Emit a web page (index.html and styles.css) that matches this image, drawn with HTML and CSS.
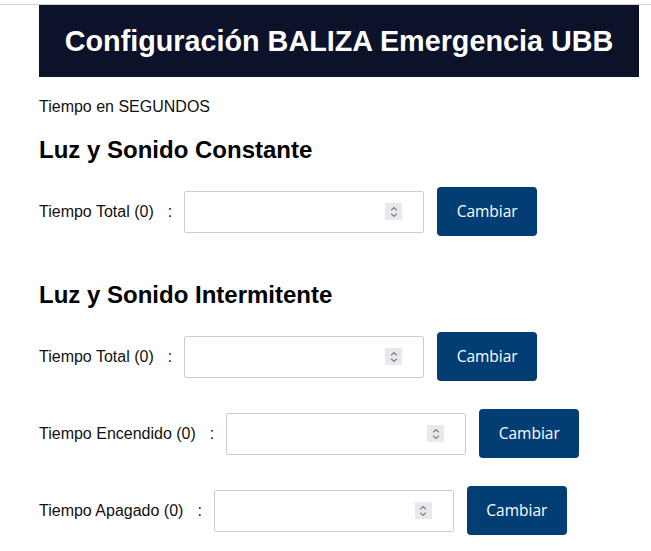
FILE: index.html
```html
<!DOCTYPE html>
<html lang="es">
<head>
<meta charset="utf-8">
<title>Configuración BALIZA Emergencia UBB</title>
<link rel="stylesheet" href="styles.css">
</head>
<body>
<div class="page">
  <header class="banner">
    <h1 class="banner-title">Configuración BALIZA Emergencia UBB</h1>
  </header>
  <main class="content">
    <p class="note">Tiempo en SEGUNDOS</p>

    <h2 class="section-title">Luz y Sonido Constante</h2>
    <div class="row">
      <span class="label">Tiempo Total (0)</span><span class="colon">:</span>
      <div class="field"><input class="field-input" type="text"><span class="spin"><svg viewBox="0 0 16 16" width="16" height="16"><path d="M5.2 6.3 L8 3.6 L10.8 6.3" /><path d="M5.2 9.7 L8 12.4 L10.8 9.7" /></svg></span></div>
      <button class="btn" type="button">Cambiar</button>
    </div>

    <h2 class="section-title second">Luz y Sonido Intermitente</h2>
    <div class="row">
      <span class="label">Tiempo Total (0)</span><span class="colon">:</span>
      <div class="field"><input class="field-input" type="text"><span class="spin"><svg viewBox="0 0 16 16" width="16" height="16"><path d="M5.2 6.3 L8 3.6 L10.8 6.3" /><path d="M5.2 9.7 L8 12.4 L10.8 9.7" /></svg></span></div>
      <button class="btn" type="button">Cambiar</button>
    </div>
    <div class="row">
      <span class="label">Tiempo Encendido (0)</span><span class="colon">:</span>
      <div class="field"><input class="field-input" type="text"><span class="spin"><svg viewBox="0 0 16 16" width="16" height="16"><path d="M5.2 6.3 L8 3.6 L10.8 6.3" /><path d="M5.2 9.7 L8 12.4 L10.8 9.7" /></svg></span></div>
      <button class="btn" type="button">Cambiar</button>
    </div>
    <div class="row">
      <span class="label">Tiempo Apagado (0)</span><span class="colon">:</span>
      <div class="field"><input class="field-input" type="text"><span class="spin"><svg viewBox="0 0 16 16" width="16" height="16"><path d="M5.2 6.3 L8 3.6 L10.8 6.3" /><path d="M5.2 9.7 L8 12.4 L10.8 9.7" /></svg></span></div>
      <button class="btn" type="button">Cambiar</button>
    </div>
  </main>
</div>
</body>
</html>
```
FILE: styles.css
```css
html, body {
  margin: 0;
  padding: 0;
  background: #ffffff;
}

body {
  font-family: "Liberation Sans", Arial, sans-serif;
  color: #111111;
  padding-top: 4px;
}

.page {
  border-top: 1px solid #cfcfcf;
  padding-left: 39px;
}

.banner {
  width: 600px;
  height: 72px;
  background: #0c1229;
  display: flex;
  align-items: center;
  justify-content: center;
}

.banner-title {
  margin: 0;
  color: #ffffff;
  font-size: 28.75px;
  font-weight: 700;
  line-height: 1;
}

.content {
  width: 600px;
}

.note {
  margin: 21px 0 0;
  font-size: 16px;
  line-height: 18px;
}

.section-title {
  margin: 20px 0 0;
  font-size: 24px;
  line-height: 27px;
  font-weight: 700;
  color: #000000;
}

.section-title.second {
  margin-top: 45px;
}

.row {
  display: flex;
  align-items: center;
  height: 49px;
}

.section-title + .row {
  margin-top: 24px;
}

.row + .row {
  margin-top: 28px;
}

.label {
  font-size: 16px;
  line-height: 18px;
  white-space: pre;
}

.colon {
  font-size: 16px;
  line-height: 18px;
  margin-left: 14px;
}

.field {
  margin-left: 12px;
  width: 240px;
  height: 42px;
  box-sizing: border-box;
  border: 1px solid #cccccc;
  border-radius: 2px;
  display: flex;
  align-items: center;
  padding: 0 21px 0 8px;
}

.field-input {
  flex: 1;
  min-width: 0;
  border: 0;
  outline: none;
  background: transparent;
  font-family: inherit;
  font-size: 16px;
  padding: 0;
}

.spin {
  width: 17px;
  height: 17px;
  background: #e9e9ed;
  display: flex;
  align-items: center;
  justify-content: center;
}

.spin svg {
  fill: none;
  stroke: #7e7e86;
  stroke-width: 1.2;
}

.btn {
  margin-left: 13px;
  width: 100px;
  height: 49px;
  border: 0;
  border-radius: 4px;
  background: #023e74;
  color: #ffffff;
  font-family: "Open Sans", "Noto Sans", sans-serif;
  font-size: 15.5px;
  padding: 0 0 2px;
}
```
